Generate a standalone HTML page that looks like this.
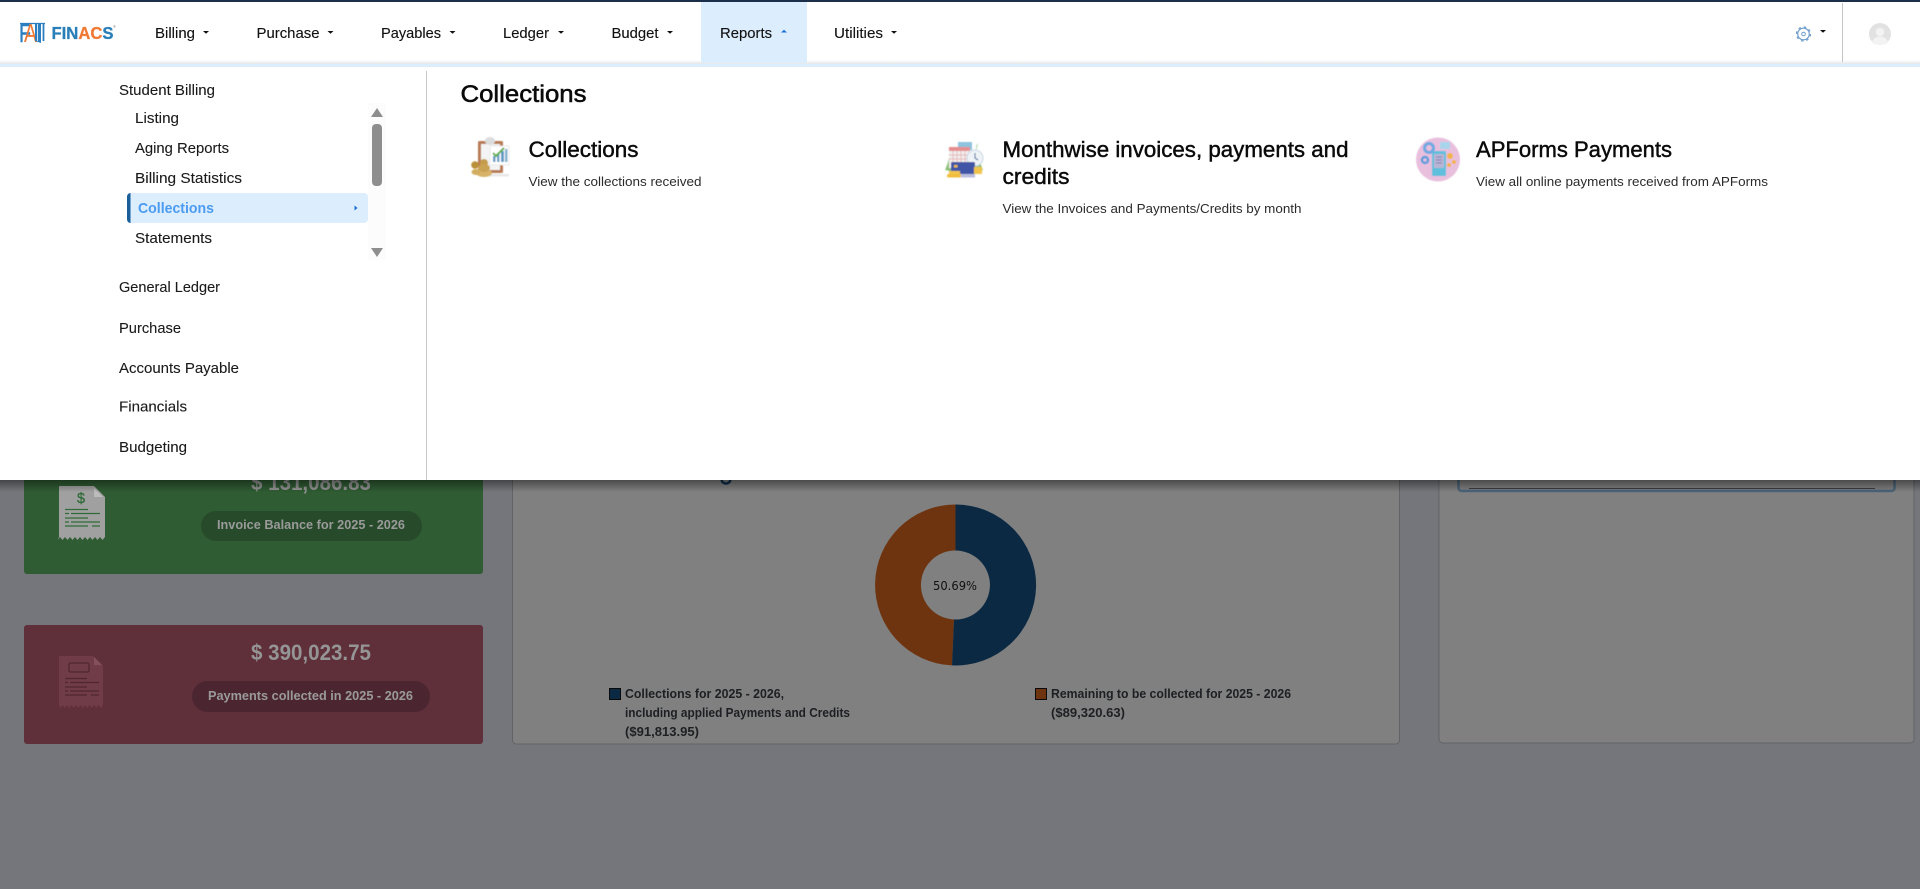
<!DOCTYPE html>
<html lang="en"><head><meta charset="utf-8"><title>Finacs</title>
<style>
html,body{margin:0;padding:0;width:1920px;height:889px;overflow:hidden;background:#75767b}
svg{display:block}
text{font-family:"Liberation Sans",sans-serif}
.n{font-size:15px;fill:#111;stroke:#111;stroke-width:.12px}
.s{font-size:15px;fill:#1a1a1a;stroke:#1a1a1a;stroke-width:.1px}
.t{font-size:22px;font-weight:500;fill:#0a0a0a;stroke:#0a0a0a;stroke-width:.45px}
.d{font-size:13px;fill:#2b2b2b}
.l{font-size:13px;font-weight:bold;fill:#1d1f22}
.p{font-size:13px;font-weight:bold;fill:#9a9a9a}
.a{font-size:22px;font-weight:bold;fill:#959595}
</style></head><body>
<svg xmlns="http://www.w3.org/2000/svg" width="1920" height="889" viewBox="0 0 1920 889">
<defs>
<linearGradient id="sh" x1="0" y1="0" x2="0" y2="1"><stop offset="0" stop-color="#000" stop-opacity=".42"/><stop offset="1" stop-color="#000" stop-opacity="0"/></linearGradient>
<linearGradient id="nb" x1="0" y1="0" x2="0" y2="1"><stop offset="0" stop-color="#fff"/><stop offset="1" stop-color="#e4e6e8"/></linearGradient>
<filter id="soft" x="-10%" y="-10%" width="120%" height="120%"><feGaussianBlur stdDeviation=".45"/></filter>
</defs>
<!-- background -->
<rect width="1920" height="889" fill="#75767b"/>
<!-- green card -->
<rect x="24" y="440" width="459" height="134" rx="3" fill="#2f5c33"/>
<path d="M59 486H94L105 497V537l-2.500 3-2.500-3-2.500 3-2.500-3-2.500 3-2.500-3-2.500 3-2.500-3-2.500 3-2.500-3-2.500 3-2.500-3-2.500 3-2.500-3-2.500 3-2.500-3-2.500 3-2.500-3-2.500 3L59 537Z" fill="#a0a0a0"/>
<path d="M94 488l9 9h-9z" fill="#bcbcbc"/>
<text x="77" y="503" font-size="15" fill="#2f6b38" stroke="#2f6b38" stroke-width=".3" textLength="8" lengthAdjust="spacingAndGlyphs">$</text>
<g stroke="#2f6b38" stroke-width="1.300"><path d="M65 509.500H88M65 513.500H69M71 513.500H100M65 518H88M65 522H69M71 522H100M65 526H88M92 526H100"/></g>
<text class="a" x="251" y="490" textLength="120" lengthAdjust="spacingAndGlyphs">$ 131,086.83</text>
<rect x="201" y="511" width="221" height="30" rx="15" fill="#264a2a"/>
<text class="p" x="217" y="529" textLength="188" lengthAdjust="spacingAndGlyphs">Invoice Balance for 2025 - 2026</text>
<!-- red card -->
<rect x="24" y="625" width="459" height="119" rx="3" fill="#5f2f3a"/>
<path d="M59 656H93L103 666V705l-2.200 3-2.300-3-2.200 3-2.300-3-2.200 3-2.300-3-2.200 3-2.300-3-2.200 3-2.300-3-2.200 3-2.300-3-2.200 3-2.300-3-2.200 3-2.300-3-2.200 3-2.300-3-2.200 3L59 705Z" fill="#6f3c48"/>
<path d="M94 657l8 8h-8z" fill="#83505c"/>
<rect x="69" y="663" width="20" height="9" rx="1.500" fill="none" stroke="#52262f" stroke-width="1.300"/>
<g stroke="#52262f" stroke-width="1.200"><path d="M65 678.500H87M65 682.500H68M70 682.500H99M65 687H87M65 691H68M70 691H99M65 695H87M91 695H99"/></g>
<text class="a" x="251" y="660" textLength="120" lengthAdjust="spacingAndGlyphs">$ 390,023.75</text>
<rect x="192" y="681" width="238" height="31" rx="15.500" fill="#4b2631"/>
<text class="p" x="208" y="700" textLength="205" lengthAdjust="spacingAndGlyphs">Payments collected in 2025 - 2026</text>
<!-- center card -->
<rect x="512.500" y="440" width="887" height="304" rx="4" fill="#808080" stroke="#616366"/>
<path d="M721.500 480c1 3 3 3.500 4.500 3.500s3.500-.5 4.500-3.500" fill="none" stroke="#0d2f4d" stroke-width="2.500"/>
<!-- donut -->
<path d="M952 665.420A80.500 80.500 0 0 1 955.500 504.500L955.500 550.500A34.500 34.500 0 0 0 954 619.470Z" fill="#6e3410"/>
<path d="M955.500 504.500A80.500 80.500 0 1 1 952 665.420L954 619.470A34.500 34.500 0 1 0 955.500 550.500Z" fill="#0b2943"/>
<text x="933" y="590" font-size="12" textLength="44" lengthAdjust="spacingAndGlyphs" fill="#111" style="font-family:'DejaVu Sans',sans-serif">50.69%</text>
<rect x="609.500" y="688.500" width="11" height="11" fill="#0b2943" stroke="#0a0a0a"/>
<text class="l" x="625" y="698" textLength="159" lengthAdjust="spacingAndGlyphs">Collections for 2025 - 2026,</text>
<text class="l" x="625" y="717" textLength="225" lengthAdjust="spacingAndGlyphs">including applied Payments and Credits</text>
<text class="l" x="625" y="736" textLength="74" lengthAdjust="spacingAndGlyphs">($91,813.95)</text>
<rect x="1035.500" y="688.500" width="11" height="11" fill="#6e3410" stroke="#0a0a0a"/>
<text class="l" x="1051" y="698" textLength="240" lengthAdjust="spacingAndGlyphs">Remaining to be collected for 2025 - 2026</text>
<text class="l" x="1051" y="717" textLength="74" lengthAdjust="spacingAndGlyphs">($89,320.63)</text>
<!-- right card -->
<rect x="1439" y="440" width="475" height="303" rx="4" fill="#808080" stroke="#616366"/>
<rect x="1458.500" y="440" width="436" height="51" rx="3" fill="none" stroke="#4a6378" stroke-width="2.500"/>
<path d="M1469 488.500H1875" stroke="#3a3e42" stroke-width="1"/>
<!-- menu shadow -->
<rect x="0" y="480" width="1920" height="12" fill="url(#sh)"/>
<!-- dropdown panel -->
<rect x="0" y="64" width="1920" height="416" fill="#fff"/>
<rect x="0" y="64" width="1920" height="3" fill="#dcedfb"/>
<rect x="426" y="71" width="1" height="409" fill="#c9c9c9"/>
<!-- navbar -->
<rect x="0" y="0" width="1920" height="64" fill="#fff"/>
<rect x="0" y="60" width="1920" height="4" fill="url(#nb)"/>
<rect x="0" y="0" width="1920" height="2" fill="#1b2f4a"/>
<rect x="701" y="2" width="106" height="61" fill="#dcedfd"/>
<!-- logo -->
<text x="19" y="42" font-size="26" fill="#2b7fc0" stroke="#2b7fc0" stroke-width=".5" textLength="12" lengthAdjust="spacingAndGlyphs">F</text>
<text x="24" y="42" font-size="26" fill="#f07a35" textLength="13" lengthAdjust="spacingAndGlyphs">A</text>
<path d="M20 23.500H45" stroke="#2b7fc0" stroke-width="1.300"/>
<path d="M35 24V41L41 43V24Z" fill="#2b7fc0"/>
<path d="M37.500 24V41" stroke="#fff" stroke-width=".8"/>
<path d="M43.500 24V41" stroke="#2b7fc0" stroke-width="1.800"/>
<text x="51.500" y="39" font-size="17.500" font-weight="bold" textLength="62" lengthAdjust="spacingAndGlyphs" fill="#2b7fb8" stroke="#2b7fb8" stroke-width=".3">FIN<tspan fill="#f07a35" stroke="#f07a35">AC</tspan>S</text>
<text x="113" y="28" font-size="4" fill="#888">®</text>
<!-- nav items -->
<text class="n" x="155" y="38" textLength="40" lengthAdjust="spacingAndGlyphs">Billing</text>
<path d="M203 31h6l-3 2.800z" fill="#111"/>
<text class="n" x="256.500" y="38" textLength="63" lengthAdjust="spacingAndGlyphs">Purchase</text>
<path d="M327.500 31h6l-3 2.800z" fill="#111"/>
<text class="n" x="381" y="38" textLength="60" lengthAdjust="spacingAndGlyphs">Payables</text>
<path d="M449.500 31h6l-3 2.800z" fill="#111"/>
<text class="n" x="503" y="38" textLength="46" lengthAdjust="spacingAndGlyphs">Ledger</text>
<path d="M558 31h6l-3 2.800z" fill="#111"/>
<text class="n" x="611.500" y="38" textLength="47" lengthAdjust="spacingAndGlyphs">Budget</text>
<path d="M667 31h6l-3 2.800z" fill="#111"/>
<text class="n" x="720" y="38" textLength="52" lengthAdjust="spacingAndGlyphs">Reports</text>
<path d="M781 32.500h6l-3-2.800z" fill="#1a6fd6"/>
<text class="n" x="834" y="38" textLength="49" lengthAdjust="spacingAndGlyphs">Utilities</text>
<path d="M891 31h6l-3 2.800z" fill="#111"/>
<!-- gear -->
<g fill="none" stroke="#6b9bcc">
<circle cx="1803.500" cy="34" r="5.800" stroke-width="1.100"/>
<circle cx="1803.500" cy="34" r="7" stroke-width="1.200" stroke-dasharray="2.500 3"/>
<circle cx="1803.500" cy="34" r="1.800" stroke-width="1"/>
</g>
<path d="M1820 30h6l-3 2.800z" fill="#111"/>
<rect x="1842" y="3" width="1" height="59" fill="#c4c4c4"/>
<!-- avatar -->
<circle cx="1880" cy="34" r="11" fill="#e2e2e2"/>
<circle cx="1880" cy="32" r="4.200" fill="#f3f3f3"/>
<path d="M1872 42.500c1-4.500 4.500-6 8-6s7 1.500 8 6c-2 1.800-5 2.500-8 2.500s-6-.7-8-2.500z" fill="#f3f3f3"/>
<!-- sidebar -->
<text class="s" x="119" y="95" textLength="96" lengthAdjust="spacingAndGlyphs">Student Billing</text>
<rect x="368" y="103" width="18" height="157" fill="#fcfcfc"/>
<path d="M371 117L377 108L383 117Z" fill="#8e8e8e"/>
<rect x="372" y="124" width="10" height="62" rx="4" fill="#8e8e8e"/>
<path d="M371 248L377 257L383 248Z" fill="#8e8e8e"/>
<text class="s" x="135" y="123" textLength="44" lengthAdjust="spacingAndGlyphs">Listing</text>
<text class="s" x="135" y="153" textLength="94" lengthAdjust="spacingAndGlyphs">Aging Reports</text>
<text class="s" x="135" y="183" textLength="107" lengthAdjust="spacingAndGlyphs">Billing Statistics</text>
<rect x="127" y="193" width="241" height="30" rx="4" fill="#dcedfd"/>
<path d="M131 193C128.500 193 127 194.500 127 197V219C127 221.500 128.500 223 131 223H130.500V193Z" fill="#1a5e99"/>
<text x="138" y="213" font-size="15" font-weight="bold" fill="#4b9cf0" textLength="76" lengthAdjust="spacingAndGlyphs">Collections</text>
<path d="M354.500 205.500L357.500 208L354.500 210.500Z" fill="#1a6fd6"/>
<text class="s" x="135" y="243" textLength="77" lengthAdjust="spacingAndGlyphs">Statements</text>
<text class="s" x="119" y="292" textLength="101" lengthAdjust="spacingAndGlyphs">General Ledger</text>
<text class="s" x="119" y="333" textLength="62" lengthAdjust="spacingAndGlyphs">Purchase</text>
<text class="s" x="119" y="373" textLength="120" lengthAdjust="spacingAndGlyphs">Accounts Payable</text>
<text class="s" x="119" y="411.500" textLength="68" lengthAdjust="spacingAndGlyphs">Financials</text>
<text class="s" x="119" y="452" textLength="68" lengthAdjust="spacingAndGlyphs">Budgeting</text>
<!-- content -->
<text x="460.500" y="102" font-size="24" font-weight="500" fill="#0a0a0a" stroke="#0a0a0a" stroke-width=".55" textLength="126" lengthAdjust="spacingAndGlyphs">Collections</text>
<text class="t" x="528.500" y="157" textLength="110" lengthAdjust="spacingAndGlyphs">Collections</text>
<text class="d" x="528.500" y="186" textLength="173" lengthAdjust="spacingAndGlyphs">View the collections received</text>
<text class="t" x="1002.500" y="157" textLength="346" lengthAdjust="spacingAndGlyphs">Monthwise invoices, payments and</text>
<text class="t" x="1002.500" y="184" textLength="67" lengthAdjust="spacingAndGlyphs">credits</text>
<text class="d" x="1002.500" y="213" textLength="299" lengthAdjust="spacingAndGlyphs">View the Invoices and Payments/Credits by month</text>
<text class="t" x="1476" y="157" textLength="196" lengthAdjust="spacingAndGlyphs">APForms Payments</text>
<text class="d" x="1476" y="186" textLength="292" lengthAdjust="spacingAndGlyphs">View all online payments received from APForms</text>
<!-- icon 1: clipboard -->
<g filter="url(#soft)">
<rect x="478" y="141" width="25" height="32" rx="1.500" fill="#b87a55"/>
<rect x="481" y="144" width="19" height="26" fill="#f4f4f4"/>
<ellipse cx="490" cy="141" rx="5" ry="4" fill="#dcdcdc"/>
<rect x="490" y="146" width="19" height="19" fill="#fff" stroke="#e2e2e2" stroke-width=".7"/>
<rect x="493" y="156" width="2.500" height="6" fill="#5e9ac4"/><rect x="497" y="153" width="2.500" height="9" fill="#6ba3c8"/><rect x="501" y="151" width="3" height="11" fill="#5e9ac4"/><rect x="505" y="149" width="2.500" height="13" fill="#7fb0cf"/>
<path d="M493 153l3 3 8-8" fill="none" stroke="#5fae48" stroke-width="2"/>
<rect x="483" y="174" width="26" height="2.500" fill="#e8e8e8"/>
<circle cx="484" cy="163" r="4" fill="#c49b4a"/>
<ellipse cx="484" cy="173" rx="8" ry="4" fill="#d7b267"/>
<ellipse cx="484" cy="168" rx="6" ry="4" fill="#c9a252"/>
<circle cx="475" cy="165" r="3.800" fill="#b98f38"/>
<ellipse cx="476" cy="172" rx="4.500" ry="3" fill="#d3ad5f"/>
</g>
<!-- icon 2: calendar -->
<g filter="url(#soft)">
<path d="M948 147c2 6 2 12-3 23l10 2zM978 143c-4 5-1 11 5 27l-12 2z" fill="#8cc07a"/>
<rect x="958" y="142" width="14" height="8" fill="#8fc2dd"/>
<rect x="949" y="147" width="21" height="21" fill="#f1efef"/>
<rect x="949" y="147" width="21" height="4" fill="#e58d8f"/>
<path d="M949 155h21M949 159h21M953 151v12M957 151v12M961 151v12M965 151v12" stroke="#e6b6b6" stroke-width=".9"/>
<circle cx="975" cy="158" r="8" fill="#eef3f7" stroke="#c9d6e2"/>
<path d="M975 153v5l3 2" fill="none" stroke="#4e6d9f" stroke-width="1.100"/>
<rect x="951" y="162" width="24" height="12" rx="1" fill="#3f55a5"/>
<rect x="954" y="165" width="3.500" height="2.500" fill="#e9b941"/>
<rect x="949" y="171" width="11" height="3" fill="#f2c44a"/><rect x="947" y="174" width="14" height="3.500" rx="1.500" fill="#f0bd3d"/>
<rect x="974" y="167" width="8" height="7" fill="#f0c34b"/><rect x="961" y="174" width="14" height="3.500" fill="#b8bedc"/>
</g>
<!-- icon 3: circle -->
<g filter="url(#soft)">
<circle cx="1438" cy="159.500" r="22" fill="#e8c0dd"/>
<rect x="1432" y="151" width="14" height="25" rx="1" fill="#5fbfdc"/>
<rect x="1434" y="154" width="10" height="14" fill="#b9b5d5"/>
<path d="M1436 157h6M1436 160h6M1436 163h6" stroke="#7f7db0" stroke-width="1"/>
<circle cx="1429" cy="148" r="4.500" fill="none" stroke="#6da9e2" stroke-width="3"/>
<circle cx="1425" cy="160" r="3" fill="none" stroke="#5d9cdd" stroke-width="2.500"/>
<rect x="1440" y="142" width="10" height="7" rx="1" fill="#a8d5ec"/>
<circle cx="1450" cy="156" r="3" fill="#f4b34a"/>
<circle cx="1454" cy="162" r="2" fill="#f4b34a"/>
<circle cx="1449" cy="165" r="2" fill="#f4b34a"/>
</g>
</svg>
</body></html>
